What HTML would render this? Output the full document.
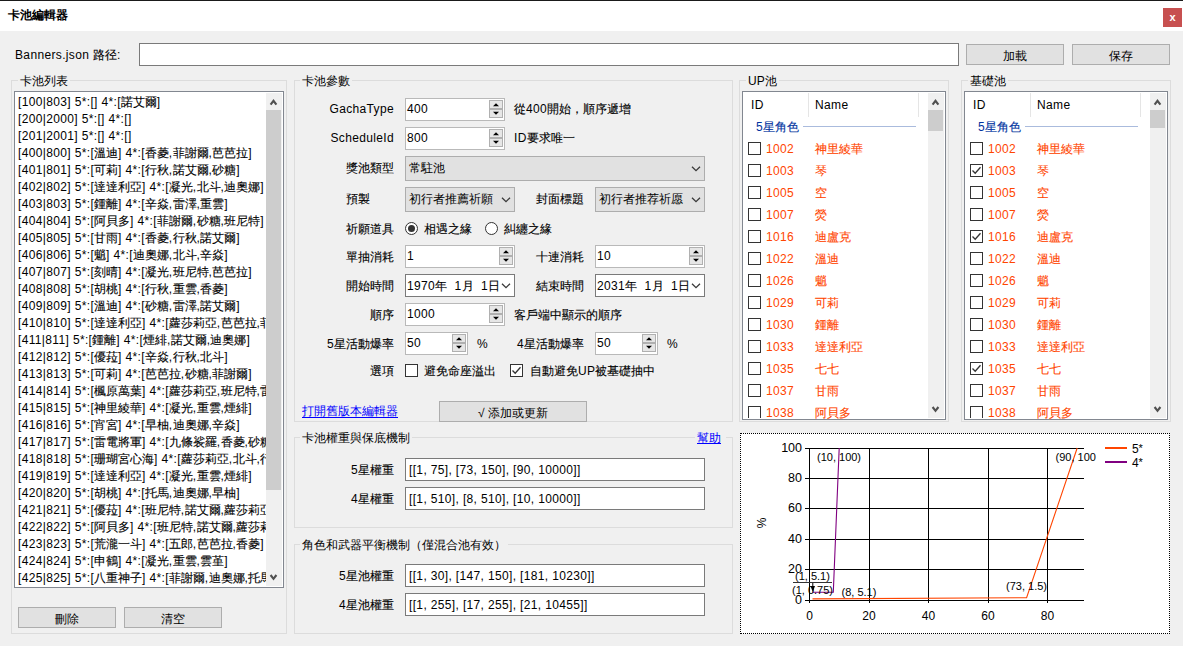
<!DOCTYPE html><html><head><meta charset="utf-8"><style>
html,body{margin:0;padding:0}
body{width:1183px;height:646px;background:#f0f0f0;position:relative;overflow:hidden;font-family:"Liberation Sans",sans-serif;font-size:12px;color:#000}
.a{position:absolute}
.t{white-space:nowrap;line-height:17px}
.gb{position:absolute;border:1px solid #dcdcdc;box-sizing:border-box}
.gt{position:absolute;background:#f0f0f0;padding:0 2px;line-height:15px;white-space:nowrap;margin-top:1px}
.btn{position:absolute;background:#e1e1e1;border:1px solid #adadad;box-sizing:border-box;text-align:center;line-height:22px}
.tb{background:#fff;border:1px solid #b9b9b9}
.spb{background:#e6e6e6;border:1px solid #b0b0b0}
.lv{background:#fff;border:1px solid #828790;box-sizing:border-box}
.cb{width:11px;height:11px;border:1px solid #333;background:#fff}
.cmb{position:absolute;background:#e1e1e1;border:1px solid #adadad;box-sizing:border-box;line-height:23px;padding-left:3px;white-space:nowrap}
.lk{color:#0000ff;text-decoration:underline}
.ch{font-size:12px}
.l{letter-spacing:0.35px}
.c{-webkit-text-stroke:0.12px}
</style></head><body>
<div class="a" style="left:0;top:0;width:1183px;height:1px;background:#1a1a1a"></div>
<div class="a" style="left:0;top:1px;width:1183px;height:30px;background:#fff"></div>
<div class="a t" style="left:8px;top:7px;font-weight:bold">卡池編輯器</div>
<div class="a" style="left:1163px;top:8px;width:19px;height:19px;background:#c75050;color:#fff;font-weight:bold;font-size:11px;text-align:center;line-height:18px">x</div>
<div class="a t" style="left:15px;top:47px;"><span class="l">Banners.json </span><span class="c">路径</span><span class="l">:</span></div>
<div class="a" style="left:139px;top:43px;width:818px;height:21px;background:#fff;border:1px solid #7a7a7a"></div>
<div class="btn" style="left:966px;top:44px;width:98px;height:21px">加載</div>
<div class="btn" style="left:1072px;top:44px;width:98px;height:21px">保存</div>
<div class="gb" style="left:11px;top:80px;width:276px;height:554px"></div>
<div class="gt" style="left:18px;top:73px">卡池列表</div>
<div class="a lv" style="left:14px;top:91px;width:270px;height:497px"></div>
<div class="a" style="left:15px;top:93px;width:251px;height:493px;overflow:hidden;padding-left:3px;padding-top:1px;box-sizing:border-box"><div class="t" style="height:17px"><span class="l">[100|803] 5*:[] 4*:[</span><span class="c">諾艾爾</span><span class="l">]</span></div><div class="t" style="height:17px"><span class="l">[200|2000] 5*:[] 4*:[]</span></div><div class="t" style="height:17px"><span class="l">[201|2001] 5*:[] 4*:[]</span></div><div class="t" style="height:17px"><span class="l">[400|800] 5*:[</span><span class="c">溫迪</span><span class="l">] 4*:[</span><span class="c">香菱</span><span class="l">,</span><span class="c">菲謝爾</span><span class="l">,</span><span class="c">芭芭拉</span><span class="l">]</span></div><div class="t" style="height:17px"><span class="l">[401|801] 5*:[</span><span class="c">可莉</span><span class="l">] 4*:[</span><span class="c">行秋</span><span class="l">,</span><span class="c">諾艾爾</span><span class="l">,</span><span class="c">砂糖</span><span class="l">]</span></div><div class="t" style="height:17px"><span class="l">[402|802] 5*:[</span><span class="c">達達利亞</span><span class="l">] 4*:[</span><span class="c">凝光</span><span class="l">,</span><span class="c">北斗</span><span class="l">,</span><span class="c">迪奧娜</span><span class="l">]</span></div><div class="t" style="height:17px"><span class="l">[403|803] 5*:[</span><span class="c">鍾離</span><span class="l">] 4*:[</span><span class="c">辛焱</span><span class="l">,</span><span class="c">雷澤</span><span class="l">,</span><span class="c">重雲</span><span class="l">]</span></div><div class="t" style="height:17px"><span class="l">[404|804] 5*:[</span><span class="c">阿貝多</span><span class="l">] 4*:[</span><span class="c">菲謝爾</span><span class="l">,</span><span class="c">砂糖</span><span class="l">,</span><span class="c">班尼特</span><span class="l">]</span></div><div class="t" style="height:17px"><span class="l">[405|805] 5*:[</span><span class="c">甘雨</span><span class="l">] 4*:[</span><span class="c">香菱</span><span class="l">,</span><span class="c">行秋</span><span class="l">,</span><span class="c">諾艾爾</span><span class="l">]</span></div><div class="t" style="height:17px"><span class="l">[406|806] 5*:[</span><span class="c">魈</span><span class="l">] 4*:[</span><span class="c">迪奧娜</span><span class="l">,</span><span class="c">北斗</span><span class="l">,</span><span class="c">辛焱</span><span class="l">]</span></div><div class="t" style="height:17px"><span class="l">[407|807] 5*:[</span><span class="c">刻晴</span><span class="l">] 4*:[</span><span class="c">凝光</span><span class="l">,</span><span class="c">班尼特</span><span class="l">,</span><span class="c">芭芭拉</span><span class="l">]</span></div><div class="t" style="height:17px"><span class="l">[408|808] 5*:[</span><span class="c">胡桃</span><span class="l">] 4*:[</span><span class="c">行秋</span><span class="l">,</span><span class="c">重雲</span><span class="l">,</span><span class="c">香菱</span><span class="l">]</span></div><div class="t" style="height:17px"><span class="l">[409|809] 5*:[</span><span class="c">溫迪</span><span class="l">] 4*:[</span><span class="c">砂糖</span><span class="l">,</span><span class="c">雷澤</span><span class="l">,</span><span class="c">諾艾爾</span><span class="l">]</span></div><div class="t" style="height:17px"><span class="l">[410|810] 5*:[</span><span class="c">達達利亞</span><span class="l">] 4*:[</span><span class="c">蘿莎莉亞</span><span class="l">,</span><span class="c">芭芭拉</span><span class="l">,</span><span class="c">菲謝爾</span><span class="l">]</span></div><div class="t" style="height:17px"><span class="l">[411|811] 5*:[</span><span class="c">鍾離</span><span class="l">] 4*:[</span><span class="c">煙緋</span><span class="l">,</span><span class="c">諾艾爾</span><span class="l">,</span><span class="c">迪奧娜</span><span class="l">]</span></div><div class="t" style="height:17px"><span class="l">[412|812] 5*:[</span><span class="c">優菈</span><span class="l">] 4*:[</span><span class="c">辛焱</span><span class="l">,</span><span class="c">行秋</span><span class="l">,</span><span class="c">北斗</span><span class="l">]</span></div><div class="t" style="height:17px"><span class="l">[413|813] 5*:[</span><span class="c">可莉</span><span class="l">] 4*:[</span><span class="c">芭芭拉</span><span class="l">,</span><span class="c">砂糖</span><span class="l">,</span><span class="c">菲謝爾</span><span class="l">]</span></div><div class="t" style="height:17px"><span class="l">[414|814] 5*:[</span><span class="c">楓原萬葉</span><span class="l">] 4*:[</span><span class="c">蘿莎莉亞</span><span class="l">,</span><span class="c">班尼特</span><span class="l">,</span><span class="c">雷澤</span><span class="l">]</span></div><div class="t" style="height:17px"><span class="l">[415|815] 5*:[</span><span class="c">神里綾華</span><span class="l">] 4*:[</span><span class="c">凝光</span><span class="l">,</span><span class="c">重雲</span><span class="l">,</span><span class="c">煙緋</span><span class="l">]</span></div><div class="t" style="height:17px"><span class="l">[416|816] 5*:[</span><span class="c">宵宮</span><span class="l">] 4*:[</span><span class="c">早柚</span><span class="l">,</span><span class="c">迪奧娜</span><span class="l">,</span><span class="c">辛焱</span><span class="l">]</span></div><div class="t" style="height:17px"><span class="l">[417|817] 5*:[</span><span class="c">雷電將軍</span><span class="l">] 4*:[</span><span class="c">九條裟羅</span><span class="l">,</span><span class="c">香菱</span><span class="l">,</span><span class="c">砂糖</span><span class="l">]</span></div><div class="t" style="height:17px"><span class="l">[418|818] 5*:[</span><span class="c">珊瑚宮心海</span><span class="l">] 4*:[</span><span class="c">蘿莎莉亞</span><span class="l">,</span><span class="c">北斗</span><span class="l">,</span><span class="c">行秋</span><span class="l">]</span></div><div class="t" style="height:17px"><span class="l">[419|819] 5*:[</span><span class="c">達達利亞</span><span class="l">] 4*:[</span><span class="c">凝光</span><span class="l">,</span><span class="c">重雲</span><span class="l">,</span><span class="c">煙緋</span><span class="l">]</span></div><div class="t" style="height:17px"><span class="l">[420|820] 5*:[</span><span class="c">胡桃</span><span class="l">] 4*:[</span><span class="c">托馬</span><span class="l">,</span><span class="c">迪奧娜</span><span class="l">,</span><span class="c">早柚</span><span class="l">]</span></div><div class="t" style="height:17px"><span class="l">[421|821] 5*:[</span><span class="c">優菈</span><span class="l">] 4*:[</span><span class="c">班尼特</span><span class="l">,</span><span class="c">諾艾爾</span><span class="l">,</span><span class="c">蘿莎莉亞</span><span class="l">]</span></div><div class="t" style="height:17px"><span class="l">[422|822] 5*:[</span><span class="c">阿貝多</span><span class="l">] 4*:[</span><span class="c">班尼特</span><span class="l">,</span><span class="c">諾艾爾</span><span class="l">,</span><span class="c">蘿莎莉亞</span><span class="l">]</span></div><div class="t" style="height:17px"><span class="l">[423|823] 5*:[</span><span class="c">荒瀧一斗</span><span class="l">] 4*:[</span><span class="c">五郎</span><span class="l">,</span><span class="c">芭芭拉</span><span class="l">,</span><span class="c">香菱</span><span class="l">]</span></div><div class="t" style="height:17px"><span class="l">[424|824] 5*:[</span><span class="c">申鶴</span><span class="l">] 4*:[</span><span class="c">凝光</span><span class="l">,</span><span class="c">重雲</span><span class="l">,</span><span class="c">雲堇</span><span class="l">]</span></div><div class="t" style="height:17px"><span class="l">[425|825] 5*:[</span><span class="c">八重神子</span><span class="l">] 4*:[</span><span class="c">菲謝爾</span><span class="l">,</span><span class="c">迪奧娜</span><span class="l">,</span><span class="c">托馬</span><span class="l">]</span></div></div>
<div class="a" style="left:266px;top:93px;width:16px;height:493px;background:#f0f0f0"></div>
<svg class="a" style="left:266px;top:93px" width="16" height="17"><polyline points="4.6,11.6 7.5,7.8 10.4,11.6" fill="none" stroke="#505050" stroke-width="2.1"/></svg>
<div class="a" style="left:266px;top:110px;width:15px;height:380px;background:#cdcdcd"></div>
<svg class="a" style="left:266px;top:569px" width="16" height="17"><polyline points="4.6,6 7.5,9.8 10.4,6" fill="none" stroke="#505050" stroke-width="2.1"/></svg>
<div class="btn" style="left:18px;top:607px;width:98px;height:21px">刪除</div>
<div class="btn" style="left:124px;top:607px;width:98px;height:21px">清空</div>
<div class="gb" style="left:294px;top:80px;width:439px;height:342px"></div>
<div class="gt" style="left:300px;top:73px">卡池參數</div>
<div class="a t" style="left:194px;width:200px;text-align:right;top:101px"><span class="l">GachaType</span></div>
<div class="a tb" style="left:405px;top:98px;width:98px;height:21px"></div><div class="a spb" style="left:489px;top:100px;width:12px;height:7px"></div><div class="a spb" style="left:489px;top:109px;width:12px;height:7px"></div><svg class="a" style="left:489px;top:100px" width="14" height="18"><polygon points="4,6.2 7,3.2 10,6.2" fill="#000"/><polygon points="4,11.8 7,14.8 10,11.8" fill="#000"/></svg><div class="a t" style="left:407px;top:101px;"><span class="l">400</span></div>
<div class="a t" style="left:514px;top:101px;"><span class="c">從</span><span class="l">400</span><span class="c">開始，順序遞增</span></div>
<div class="a t" style="left:194px;width:200px;text-align:right;top:130px"><span class="l">ScheduleId</span></div>
<div class="a tb" style="left:405px;top:127px;width:98px;height:21px"></div><div class="a spb" style="left:489px;top:129px;width:12px;height:7px"></div><div class="a spb" style="left:489px;top:138px;width:12px;height:7px"></div><svg class="a" style="left:489px;top:129px" width="14" height="18"><polygon points="4,6.2 7,3.2 10,6.2" fill="#000"/><polygon points="4,11.8 7,14.8 10,11.8" fill="#000"/></svg><div class="a t" style="left:407px;top:130px;"><span class="l">800</span></div>
<div class="a t" style="left:514px;top:130px;"><span class="l">ID</span><span class="c">要求唯一</span></div>
<div class="a t" style="left:194px;width:200px;text-align:right;top:160px"><span class="c">獎池類型</span></div>
<div class="cmb" style="left:405px;top:156px;width:300px;height:25px">常駐池</div>
<svg class="a" style="left:690px;top:165px" width="12" height="8"><polyline points="2,1.7 6,5.7 10,1.7" fill="none" stroke="#3a3a3a" stroke-width="1.3"/></svg>
<div class="a t" style="left:346px;top:191px;"><span class="c">預製</span></div>
<div class="cmb" style="left:405px;top:187px;width:110px;height:25px">初行者推薦祈願</div>
<svg class="a" style="left:500px;top:196px" width="12" height="8"><polyline points="2,1.7 6,5.7 10,1.7" fill="none" stroke="#3a3a3a" stroke-width="1.3"/></svg>
<div class="a t" style="left:384px;width:200px;text-align:right;top:191px"><span class="c">封面標題</span></div>
<div class="cmb" style="left:595px;top:187px;width:110px;height:25px">初行者推荐祈愿</div>
<svg class="a" style="left:690px;top:196px" width="12" height="8"><polyline points="2,1.7 6,5.7 10,1.7" fill="none" stroke="#3a3a3a" stroke-width="1.3"/></svg>
<div class="a t" style="left:194px;width:200px;text-align:right;top:221px"><span class="c">祈願道具</span></div>
<svg class="a" style="left:405px;top:222px" width="13" height="13"><circle cx="6.5" cy="6.5" r="6" fill="#fff" stroke="#333" stroke-width="1"/><circle cx="6.5" cy="6.5" r="3.5" fill="#333"/></svg>
<div class="a t" style="left:424px;top:221px;"><span class="c">相遇之緣</span></div>
<svg class="a" style="left:485px;top:222px" width="13" height="13"><circle cx="6.5" cy="6.5" r="6" fill="#fff" stroke="#333" stroke-width="1"/></svg>
<div class="a t" style="left:504px;top:221px;"><span class="c">糾纏之緣</span></div>
<div class="a t" style="left:194px;width:200px;text-align:right;top:249px"><span class="c">單抽消耗</span></div>
<div class="a tb" style="left:405px;top:245px;width:108px;height:21px"></div><div class="a spb" style="left:499px;top:247px;width:12px;height:7px"></div><div class="a spb" style="left:499px;top:256px;width:12px;height:7px"></div><svg class="a" style="left:499px;top:247px" width="14" height="18"><polygon points="4,6.2 7,3.2 10,6.2" fill="#000"/><polygon points="4,11.8 7,14.8 10,11.8" fill="#000"/></svg><div class="a t" style="left:407px;top:248px;"><span class="l">1</span></div>
<div class="a t" style="left:384px;width:200px;text-align:right;top:249px"><span class="c">十連消耗</span></div>
<div class="a tb" style="left:595px;top:245px;width:108px;height:21px"></div><div class="a spb" style="left:689px;top:247px;width:12px;height:7px"></div><div class="a spb" style="left:689px;top:256px;width:12px;height:7px"></div><svg class="a" style="left:689px;top:247px" width="14" height="18"><polygon points="4,6.2 7,3.2 10,6.2" fill="#000"/><polygon points="4,11.8 7,14.8 10,11.8" fill="#000"/></svg><div class="a t" style="left:597px;top:248px;"><span class="l">10</span></div>
<div class="a t" style="left:194px;width:200px;text-align:right;top:278px"><span class="c">開始時間</span></div>
<div class="a" style="left:405px;top:274px;width:108px;height:21px;background:#fff;border:1px solid #7a7a7a"></div>
<div class="a t" style="left:407px;top:278px;"><span class="l">1970</span><span class="c">年</span><span class="l">&nbsp; 1</span><span class="c">月</span><span class="l">&nbsp; 1</span><span class="c">日</span></div>
<svg class="a" style="left:500px;top:282px" width="12" height="8"><polyline points="2,1.7 6,5.7 10,1.7" fill="none" stroke="#3a3a3a" stroke-width="1.3"/></svg>
<div class="a t" style="left:384px;width:200px;text-align:right;top:278px"><span class="c">結束時間</span></div>
<div class="a" style="left:595px;top:274px;width:108px;height:21px;background:#fff;border:1px solid #7a7a7a"></div>
<div class="a t" style="left:597px;top:278px;"><span class="l">2031</span><span class="c">年</span><span class="l">&nbsp; 1</span><span class="c">月</span><span class="l">&nbsp; 1</span><span class="c">日</span></div>
<svg class="a" style="left:690px;top:282px" width="12" height="8"><polyline points="2,1.7 6,5.7 10,1.7" fill="none" stroke="#3a3a3a" stroke-width="1.3"/></svg>
<div class="a t" style="left:194px;width:200px;text-align:right;top:307px"><span class="c">順序</span></div>
<div class="a tb" style="left:405px;top:303px;width:98px;height:21px"></div><div class="a spb" style="left:489px;top:305px;width:12px;height:7px"></div><div class="a spb" style="left:489px;top:314px;width:12px;height:7px"></div><svg class="a" style="left:489px;top:305px" width="14" height="18"><polygon points="4,6.2 7,3.2 10,6.2" fill="#000"/><polygon points="4,11.8 7,14.8 10,11.8" fill="#000"/></svg><div class="a t" style="left:407px;top:306px;"><span class="l">1000</span></div>
<div class="a t" style="left:514px;top:307px;"><span class="c">客戶端中顯示的順序</span></div>
<div class="a t" style="left:194px;width:200px;text-align:right;top:336px"><span class="l">5</span><span class="c">星活動爆率</span></div>
<div class="a tb" style="left:405px;top:332px;width:61px;height:21px"></div><div class="a spb" style="left:452px;top:334px;width:12px;height:7px"></div><div class="a spb" style="left:452px;top:343px;width:12px;height:7px"></div><svg class="a" style="left:452px;top:334px" width="14" height="18"><polygon points="4,6.2 7,3.2 10,6.2" fill="#000"/><polygon points="4,11.8 7,14.8 10,11.8" fill="#000"/></svg><div class="a t" style="left:407px;top:335px;"><span class="l">50</span></div>
<div class="a t" style="left:477px;top:336px;"><span class="l">%</span></div>
<div class="a t" style="left:384px;width:200px;text-align:right;top:336px"><span class="l">4</span><span class="c">星活動爆率</span></div>
<div class="a tb" style="left:595px;top:332px;width:61px;height:21px"></div><div class="a spb" style="left:642px;top:334px;width:12px;height:7px"></div><div class="a spb" style="left:642px;top:343px;width:12px;height:7px"></div><svg class="a" style="left:642px;top:334px" width="14" height="18"><polygon points="4,6.2 7,3.2 10,6.2" fill="#000"/><polygon points="4,11.8 7,14.8 10,11.8" fill="#000"/></svg><div class="a t" style="left:597px;top:335px;"><span class="l">50</span></div>
<div class="a t" style="left:667px;top:336px;"><span class="l">%</span></div>
<div class="a t" style="left:194px;width:200px;text-align:right;top:363px"><span class="c">選項</span></div>
<div class="a cb" style="left:405px;top:364px"></div>
<div class="a t" style="left:424px;top:363px;"><span class="c">避免命座溢出</span></div>
<div class="a cb" style="left:510px;top:364px"><svg width="11" height="11" style="position:absolute;left:0;top:0"><polyline points="1.5,5.5 4.2,8.3 9.5,2.2" fill="none" stroke="#333" stroke-width="1.3"/></svg></div>
<div class="a t" style="left:530px;top:363px;"><span class="c">自動避免</span><span class="l">UP</span><span class="c">被基礎抽中</span></div>
<div class="a t lk" style="left:302px;top:403px;text-underline-offset:2px">打開舊版本編輯器</div>
<div class="btn" style="left:439px;top:401px;width:148px;height:21px">√ 添加或更新</div>
<div class="gb" style="left:294px;top:437px;width:439px;height:91px"></div>
<div class="gt" style="left:300px;top:430px">卡池權重與保底機制</div>
<div class="gt lk" style="left:695px;top:430px;padding-right:5px">幫助</div>
<div class="a t" style="left:194px;width:200px;text-align:right;top:462px"><span class="l">5</span><span class="c">星權重</span></div>
<div class="a tb" style="left:405px;top:458px;width:298px;height:21px;border-color:#7a7a7a"></div><div class="a t" style="left:409px;top:462px;"><span class="l">[[1, 75], [73, 150], [90, 10000]]</span></div>
<div class="a t" style="left:194px;width:200px;text-align:right;top:491px"><span class="l">4</span><span class="c">星權重</span></div>
<div class="a tb" style="left:405px;top:487px;width:298px;height:21px;border-color:#7a7a7a"></div><div class="a t" style="left:409px;top:491px;"><span class="l">[[1, 510], [8, 510], [10, 10000]]</span></div>
<div class="gb" style="left:294px;top:544px;width:439px;height:90px"></div>
<div class="gt" style="left:300px;top:537px">角色和武器平衡機制（僅混合池有效）</div>
<div class="a t" style="left:194px;width:200px;text-align:right;top:568px"><span class="l">5</span><span class="c">星池權重</span></div>
<div class="a tb" style="left:405px;top:564px;width:298px;height:21px;border-color:#7a7a7a"></div><div class="a t" style="left:409px;top:568px;"><span class="l">[[1, 30], [147, 150], [181, 10230]]</span></div>
<div class="a t" style="left:194px;width:200px;text-align:right;top:597px"><span class="l">4</span><span class="c">星池權重</span></div>
<div class="a tb" style="left:405px;top:593px;width:298px;height:21px;border-color:#7a7a7a"></div><div class="a t" style="left:409px;top:597px;"><span class="l">[[1, 255], [17, 255], [21, 10455]]</span></div>
<div class="gb" style="left:739px;top:80px;width:210px;height:342px"></div>
<div class="gt" style="left:746px;top:73px">UP池</div>
<div class="a lv" style="left:742px;top:91px;width:204px;height:329px"></div>
<div class="a t" style="left:751px;top:97px;"><span class="l">ID</span></div>
<div class="a t" style="left:815px;top:97px;"><span class="l">Name</span></div>
<div class="a" style="left:808px;top:93px;width:1px;height:24px;background:#e5e5e5"></div>
<div class="a" style="left:918px;top:93px;width:1px;height:24px;background:#e5e5e5"></div>
<div class="a t" style="left:756px;top:119px;color:#0033a0"><span class="l">5</span><span class="c">星角色</span></div>
<div class="a" style="left:803px;top:126px;width:113px;height:1px;background:#aabbdd"></div>
<div class="a cb" style="left:748px;top:142px"></div>
<div class="a t" style="left:766px;top:141px;color:#ff4500;"><span class="l">1002</span></div>
<div class="a t" style="left:815px;top:141px;color:#ff4500;"><span class="c">神里綾華</span></div>
<div class="a cb" style="left:748px;top:164px"></div>
<div class="a t" style="left:766px;top:163px;color:#ff4500;"><span class="l">1003</span></div>
<div class="a t" style="left:815px;top:163px;color:#ff4500;"><span class="c">琴</span></div>
<div class="a cb" style="left:748px;top:186px"></div>
<div class="a t" style="left:766px;top:185px;color:#ff4500;"><span class="l">1005</span></div>
<div class="a t" style="left:815px;top:185px;color:#ff4500;"><span class="c">空</span></div>
<div class="a cb" style="left:748px;top:208px"></div>
<div class="a t" style="left:766px;top:207px;color:#ff4500;"><span class="l">1007</span></div>
<div class="a t" style="left:815px;top:207px;color:#ff4500;"><span class="c">熒</span></div>
<div class="a cb" style="left:748px;top:230px"></div>
<div class="a t" style="left:766px;top:229px;color:#ff4500;"><span class="l">1016</span></div>
<div class="a t" style="left:815px;top:229px;color:#ff4500;"><span class="c">迪盧克</span></div>
<div class="a cb" style="left:748px;top:252px"></div>
<div class="a t" style="left:766px;top:251px;color:#ff4500;"><span class="l">1022</span></div>
<div class="a t" style="left:815px;top:251px;color:#ff4500;"><span class="c">溫迪</span></div>
<div class="a cb" style="left:748px;top:274px"></div>
<div class="a t" style="left:766px;top:273px;color:#ff4500;"><span class="l">1026</span></div>
<div class="a t" style="left:815px;top:273px;color:#ff4500;"><span class="c">魈</span></div>
<div class="a cb" style="left:748px;top:296px"></div>
<div class="a t" style="left:766px;top:295px;color:#ff4500;"><span class="l">1029</span></div>
<div class="a t" style="left:815px;top:295px;color:#ff4500;"><span class="c">可莉</span></div>
<div class="a cb" style="left:748px;top:318px"></div>
<div class="a t" style="left:766px;top:317px;color:#ff4500;"><span class="l">1030</span></div>
<div class="a t" style="left:815px;top:317px;color:#ff4500;"><span class="c">鍾離</span></div>
<div class="a cb" style="left:748px;top:340px"></div>
<div class="a t" style="left:766px;top:339px;color:#ff4500;"><span class="l">1033</span></div>
<div class="a t" style="left:815px;top:339px;color:#ff4500;"><span class="c">達達利亞</span></div>
<div class="a cb" style="left:748px;top:362px"></div>
<div class="a t" style="left:766px;top:361px;color:#ff4500;"><span class="l">1035</span></div>
<div class="a t" style="left:815px;top:361px;color:#ff4500;"><span class="c">七七</span></div>
<div class="a cb" style="left:748px;top:384px"></div>
<div class="a t" style="left:766px;top:383px;color:#ff4500;"><span class="l">1037</span></div>
<div class="a t" style="left:815px;top:383px;color:#ff4500;"><span class="c">甘雨</span></div>
<div class="a cb" style="left:748px;top:406px;height:11px;border-bottom:none"></div>
<div class="a t" style="left:766px;top:405px;color:#ff4500;height:14px;overflow:hidden;"><span class="l">1038</span></div>
<div class="a t" style="left:815px;top:405px;color:#ff4500;height:14px;overflow:hidden;"><span class="c">阿貝多</span></div>
<div class="a" style="left:928px;top:93px;width:16px;height:325px;background:#f0f0f0"></div>
<svg class="a" style="left:928px;top:93px" width="16" height="17"><polyline points="4.6,11.6 7.5,7.8 10.4,11.6" fill="none" stroke="#505050" stroke-width="2.1"/></svg>
<div class="a" style="left:928px;top:110px;width:15px;height:21px;background:#cdcdcd"></div>
<svg class="a" style="left:928px;top:401px" width="16" height="17"><polyline points="4.6,6 7.5,9.8 10.4,6" fill="none" stroke="#505050" stroke-width="2.1"/></svg>
<div class="gb" style="left:961px;top:80px;width:210px;height:342px"></div>
<div class="gt" style="left:968px;top:73px">基礎池</div>
<div class="a lv" style="left:964px;top:91px;width:204px;height:329px"></div>
<div class="a t" style="left:973px;top:97px;"><span class="l">ID</span></div>
<div class="a t" style="left:1037px;top:97px;"><span class="l">Name</span></div>
<div class="a" style="left:1030px;top:93px;width:1px;height:24px;background:#e5e5e5"></div>
<div class="a" style="left:1140px;top:93px;width:1px;height:24px;background:#e5e5e5"></div>
<div class="a t" style="left:978px;top:119px;color:#0033a0"><span class="l">5</span><span class="c">星角色</span></div>
<div class="a" style="left:1025px;top:126px;width:113px;height:1px;background:#aabbdd"></div>
<div class="a cb" style="left:970px;top:142px"></div>
<div class="a t" style="left:988px;top:141px;color:#ff4500;"><span class="l">1002</span></div>
<div class="a t" style="left:1037px;top:141px;color:#ff4500;"><span class="c">神里綾華</span></div>
<div class="a cb" style="left:970px;top:164px"><svg width="11" height="11" style="position:absolute;left:0;top:0"><polyline points="1.5,5.5 4.2,8.3 9.5,2.2" fill="none" stroke="#333" stroke-width="1.3"/></svg></div>
<div class="a t" style="left:988px;top:163px;color:#ff4500;"><span class="l">1003</span></div>
<div class="a t" style="left:1037px;top:163px;color:#ff4500;"><span class="c">琴</span></div>
<div class="a cb" style="left:970px;top:186px"></div>
<div class="a t" style="left:988px;top:185px;color:#ff4500;"><span class="l">1005</span></div>
<div class="a t" style="left:1037px;top:185px;color:#ff4500;"><span class="c">空</span></div>
<div class="a cb" style="left:970px;top:208px"></div>
<div class="a t" style="left:988px;top:207px;color:#ff4500;"><span class="l">1007</span></div>
<div class="a t" style="left:1037px;top:207px;color:#ff4500;"><span class="c">熒</span></div>
<div class="a cb" style="left:970px;top:230px"><svg width="11" height="11" style="position:absolute;left:0;top:0"><polyline points="1.5,5.5 4.2,8.3 9.5,2.2" fill="none" stroke="#333" stroke-width="1.3"/></svg></div>
<div class="a t" style="left:988px;top:229px;color:#ff4500;"><span class="l">1016</span></div>
<div class="a t" style="left:1037px;top:229px;color:#ff4500;"><span class="c">迪盧克</span></div>
<div class="a cb" style="left:970px;top:252px"></div>
<div class="a t" style="left:988px;top:251px;color:#ff4500;"><span class="l">1022</span></div>
<div class="a t" style="left:1037px;top:251px;color:#ff4500;"><span class="c">溫迪</span></div>
<div class="a cb" style="left:970px;top:274px"></div>
<div class="a t" style="left:988px;top:273px;color:#ff4500;"><span class="l">1026</span></div>
<div class="a t" style="left:1037px;top:273px;color:#ff4500;"><span class="c">魈</span></div>
<div class="a cb" style="left:970px;top:296px"></div>
<div class="a t" style="left:988px;top:295px;color:#ff4500;"><span class="l">1029</span></div>
<div class="a t" style="left:1037px;top:295px;color:#ff4500;"><span class="c">可莉</span></div>
<div class="a cb" style="left:970px;top:318px"></div>
<div class="a t" style="left:988px;top:317px;color:#ff4500;"><span class="l">1030</span></div>
<div class="a t" style="left:1037px;top:317px;color:#ff4500;"><span class="c">鍾離</span></div>
<div class="a cb" style="left:970px;top:340px"></div>
<div class="a t" style="left:988px;top:339px;color:#ff4500;"><span class="l">1033</span></div>
<div class="a t" style="left:1037px;top:339px;color:#ff4500;"><span class="c">達達利亞</span></div>
<div class="a cb" style="left:970px;top:362px"><svg width="11" height="11" style="position:absolute;left:0;top:0"><polyline points="1.5,5.5 4.2,8.3 9.5,2.2" fill="none" stroke="#333" stroke-width="1.3"/></svg></div>
<div class="a t" style="left:988px;top:361px;color:#ff4500;"><span class="l">1035</span></div>
<div class="a t" style="left:1037px;top:361px;color:#ff4500;"><span class="c">七七</span></div>
<div class="a cb" style="left:970px;top:384px"></div>
<div class="a t" style="left:988px;top:383px;color:#ff4500;"><span class="l">1037</span></div>
<div class="a t" style="left:1037px;top:383px;color:#ff4500;"><span class="c">甘雨</span></div>
<div class="a cb" style="left:970px;top:406px;height:11px;border-bottom:none"></div>
<div class="a t" style="left:988px;top:405px;color:#ff4500;height:14px;overflow:hidden;"><span class="l">1038</span></div>
<div class="a t" style="left:1037px;top:405px;color:#ff4500;height:14px;overflow:hidden;"><span class="c">阿貝多</span></div>
<div class="a" style="left:1150px;top:93px;width:16px;height:325px;background:#f0f0f0"></div>
<svg class="a" style="left:1150px;top:93px" width="16" height="17"><polyline points="4.6,11.6 7.5,7.8 10.4,11.6" fill="none" stroke="#505050" stroke-width="2.1"/></svg>
<div class="a" style="left:1150px;top:110px;width:15px;height:18px;background:#cdcdcd"></div>
<svg class="a" style="left:1150px;top:401px" width="16" height="17"><polyline points="4.6,6 7.5,9.8 10.4,6" fill="none" stroke="#505050" stroke-width="2.1"/></svg>
<div class="a" style="left:740px;top:433px;width:428px;height:199px;background:#fff;border:1px dotted #000"></div>
<svg class="a" style="left:0;top:0" width="1183" height="646" font-family="Liberation Sans" >
<line x1="805" y1="448.5" x2="1084" y2="448.5" stroke="#000" stroke-width="1"/>
<line x1="805" y1="478.5" x2="1084" y2="478.5" stroke="#000" stroke-width="1"/>
<line x1="805" y1="508.5" x2="1084" y2="508.5" stroke="#000" stroke-width="1"/>
<line x1="805" y1="539.5" x2="1084" y2="539.5" stroke="#000" stroke-width="1"/>
<line x1="805" y1="569.5" x2="1084" y2="569.5" stroke="#000" stroke-width="1"/>
<line x1="805" y1="600.5" x2="1084" y2="600.5" stroke="#000" stroke-width="1"/>
<line x1="809.5" y1="448" x2="809.5" y2="603" stroke="#000" stroke-width="1"/>
<line x1="869.5" y1="448" x2="869.5" y2="603" stroke="#000" stroke-width="1"/>
<line x1="928.5" y1="448" x2="928.5" y2="603" stroke="#000" stroke-width="1"/>
<line x1="988.5" y1="448" x2="988.5" y2="603" stroke="#000" stroke-width="1"/>
<line x1="1047.5" y1="448" x2="1047.5" y2="603" stroke="#000" stroke-width="1"/>
<polyline points="812.5,598.9 1026.6,597.7 1077.2,448.0" fill="none" stroke="#ff4500" stroke-width="1.1"/>
<polyline points="812.5,592.2 833.3,592.2 839.2,448.0" fill="none" stroke="#800080" stroke-width="1.1"/>
<text x="802" y="604.0" font-size="12.5" text-anchor="end">0</text>
<text x="802" y="573.0" font-size="12.5" text-anchor="end">20</text>
<text x="802" y="543.0" font-size="12.5" text-anchor="end">40</text>
<text x="802" y="512.0" font-size="12.5" text-anchor="end">60</text>
<text x="802" y="482.0" font-size="12.5" text-anchor="end">80</text>
<text x="802" y="452.0" font-size="12.5" text-anchor="end">100</text>
<text x="809.5" y="620" font-size="12" text-anchor="middle">0</text>
<text x="869.0" y="620" font-size="12" text-anchor="middle">20</text>
<text x="928.5" y="620" font-size="12" text-anchor="middle">40</text>
<text x="987.9" y="620" font-size="12" text-anchor="middle">60</text>
<text x="1047.4" y="620" font-size="12" text-anchor="middle">80</text>
<text x="0" y="0" font-size="12" transform="translate(766,523) rotate(-90)" text-anchor="middle">%</text>
<text x="817" y="461.2" font-size="11">(10, 100)</text>
<text x="1055.5" y="460.5" font-size="11">(90, 100</text>
<text x="1006" y="590.2" font-size="11">(73, 1.5)</text>
<text x="841.5" y="596" font-size="11">(8, 5.1)</text>
<text x="795" y="579.6" font-size="11">(1, 5.1)</text>
<text x="792" y="594.4" font-size="11">(1, 0.75)</text>
<line x1="793" y1="582.5" x2="832" y2="582.5" stroke="#333" stroke-width="1"/>
<polygon points="810.5,586 815,586 812.8,592" fill="#000"/>
<line x1="812.8" y1="583" x2="812.8" y2="587" stroke="#000" stroke-width="1"/>
<line x1="1105" y1="448" x2="1127" y2="448" stroke="#ff4500" stroke-width="2"/>
<line x1="1105" y1="462" x2="1127" y2="462" stroke="#800080" stroke-width="2"/>
<text x="1132" y="453" font-size="12">5</text><text x="1138.5" y="452" font-size="11">*</text>
<text x="1132" y="467" font-size="12">4</text><text x="1138.5" y="466" font-size="11">*</text>
</svg>
</body></html>
